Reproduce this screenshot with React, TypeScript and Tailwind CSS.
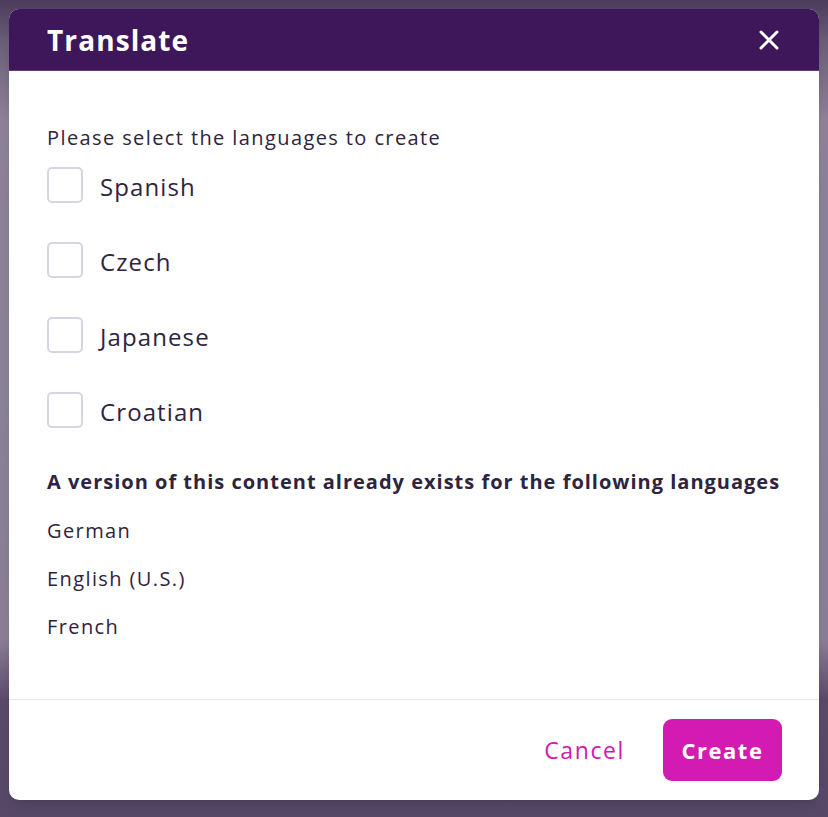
import React, { useState } from 'react'

const toCreate = ['Spanish', 'Czech', 'Japanese', 'Croatian']
const existing = ['German', 'English (U.S.)', 'French']

const App: React.FC = () => {
  const [checked, setChecked] = useState<string[]>([])

  const toggle = (lang: string) => {
    setChecked(checked.includes(lang) ? checked.filter(l => l !== lang) : [...checked, lang])
  }

  return (
    <div
      className="w-[828px] h-[817px] p-[9px] pb-[17px] bg-[linear-gradient(180deg,#4b3b5c_0px,#6b5d78_40px,#8e8398_120px,#8b8397_400px,#8a7f95_640px,#5a4a6c_700px,#574868_817px)]"
      style={{ fontFamily: '"Open Sans", "Noto Sans", sans-serif' }}
    >
      <div className="w-[810px] h-[791px] bg-white rounded-[10px] overflow-hidden flex flex-col shadow-lg">
        <div className="h-[62px] bg-[#3e175a] flex items-center justify-between pl-[38px] pr-[38px] border-b border-[#5a3a78]">
          <h1 className="text-white text-[28px] font-bold tracking-[1.1px]">Translate</h1>
          <button className="text-white">
            <svg width="24" height="24" viewBox="0 0 24 24" fill="none" stroke="currentColor" strokeWidth="3" strokeLinecap="round">
              <path d="M4 4L20 20M20 4L4 20" />
            </svg>
          </button>
        </div>

        <div className="flex-1 px-[38px] pt-[55px] text-[#2e2440]">
          <p className="text-[20px] leading-[24px] tracking-[1.4px]">Please select the languages to create</p>
          <div className="mt-[17px] flex flex-col gap-[39px]">
            {toCreate.map(lang => (
              <label key={lang} className="flex items-center gap-[17px] cursor-pointer" onClick={() => toggle(lang)}>
                <span className="w-[36px] h-[36px] rounded-[5px] border-2 border-[#d6d6e2] bg-white flex items-center justify-center">
                  {checked.includes(lang) && (
                    <svg width="20" height="20" viewBox="0 0 24 24" fill="none" stroke="#3e175a" strokeWidth="3">
                      <path d="M4 12l5 5L20 6" />
                    </svg>
                  )}
                </span>
                <span className="pt-[4px] text-[24px] leading-[28px] tracking-[1.1px]">{lang}</span>
              </label>
            ))}
          </div>

          <h2 className="mt-[41px] text-[20px] leading-[26px] font-bold tracking-[1px]">A version of this content already exists for the following languages</h2>
          <div className="mt-[24px] flex flex-col gap-[24px]">
            {existing.map(lang => (
              <p key={lang} className="text-[20px] leading-[24px] tracking-[1.4px]">{lang}</p>
            ))}
          </div>
        </div>

        <div className="h-[101px] border-t border-[#e2e2f4] flex items-center justify-end gap-[38px] pr-[37px]">
          <button className="text-[#d01ab2] text-[23px] tracking-[1.6px]">Cancel</button>
          <button className="w-[119px] h-[62px] rounded-[9px] bg-[#d31ab3] text-white text-[22px] font-bold tracking-[1.5px]">Create</button>
        </div>
      </div>
    </div>
  )
}

export default App
